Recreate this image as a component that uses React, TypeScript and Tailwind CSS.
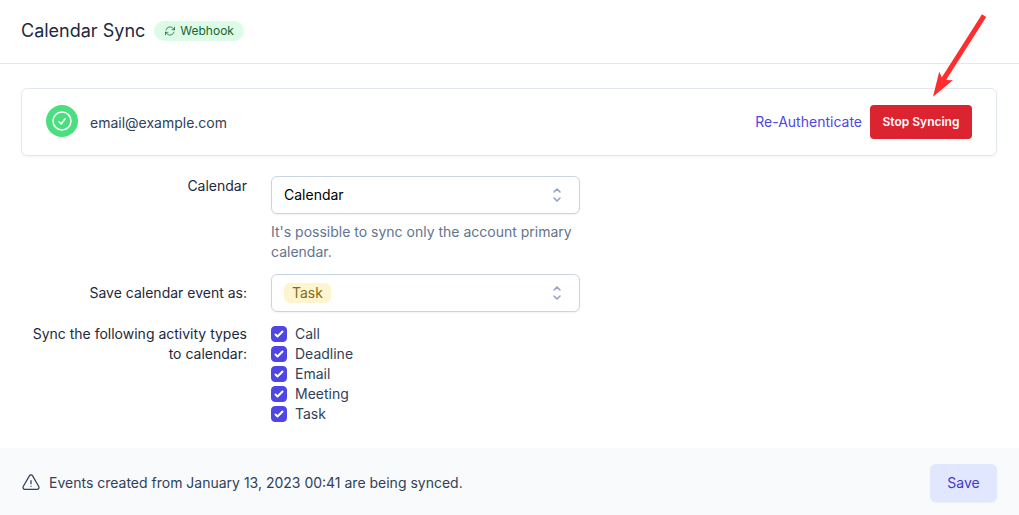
import { useState } from "react";
import type { ReactNode } from "react";

const activityTypes = ["Call", "Deadline", "Email", "Meeting", "Task"];

function OutlineIcon({ d, className }: { d: string; className: string }) {
  return (
    <svg
      viewBox="0 0 24 24"
      fill="none"
      stroke="currentColor"
      strokeWidth={1.5}
      strokeLinecap="round"
      strokeLinejoin="round"
      aria-hidden="true"
      className={className}
    >
      <path d={d} />
    </svg>
  );
}

const paths = {
  refresh:
    "M16.023 9.348h4.992v-.001M2.985 19.644v-4.992m0 0h4.992m-4.993 0 3.181 3.183a8.25 8.25 0 0 0 13.803-3.7M4.031 9.865a8.25 8.25 0 0 1 13.803-3.7l3.181 3.182m0-4.991v4.99",
  check: "M9 12.75 11.25 15 15 9.75M21 12a9 9 0 1 1-18 0 9 9 0 0 1 18 0Z",
  warning:
    "M12 9v3.75m-9.303 3.376c-.866 1.5.217 3.374 1.948 3.374h14.71c1.73 0 2.813-1.874 1.948-3.374L13.949 3.378c-.866-1.5-3.032-1.5-3.898 0L2.697 16.126ZM12 15.75h.007v.008H12v-.008Z",
};

function SelectBox({ children }: { children: ReactNode }) {
  return (
    <div className="flex h-[38px] items-center justify-between rounded-md border border-slate-300 bg-white px-3 shadow-xs">
      {children}
      <svg
        viewBox="0 0 20 20"
        fill="none"
        stroke="currentColor"
        strokeWidth={1.5}
        strokeLinecap="round"
        strokeLinejoin="round"
        aria-hidden="true"
        className="pointer-events-none size-5 shrink-0 text-slate-400"
      >
        <path d="M7 7l3-3 3 3m0 6l-3 3-3-3" />
      </svg>
    </div>
  );
}

function ActivityCheckbox({ name }: { name: string }) {
  const [checked, setChecked] = useState(true);
  return (
    <label className="flex h-5 items-center gap-2 text-slate-700">
      <span className="grid size-4 place-items-center">
        <input
          type="checkbox"
          checked={checked}
          onChange={(e) => setChecked(e.target.checked)}
          className="col-start-1 row-start-1 size-4 appearance-none rounded-sm border border-slate-300 bg-white checked:border-[#4f46e5] checked:bg-[#4f46e5]"
        />
        {checked && (
          <svg viewBox="0 0 16 16" fill="#fff" aria-hidden="true" className="pointer-events-none col-start-1 row-start-1 size-4">
            <path d="M12.207 4.793a1 1 0 010 1.414l-5 5a1 1 0 01-1.414 0l-2-2a1 1 0 011.414-1.414L6.5 9.086l4.293-4.293a1 1 0 011.414 0z" />
          </svg>
        )}
      </span>
      {name}
    </label>
  );
}

export default function App() {
  return (
    <div className="relative bg-white font-['Inter','Liberation_Sans',sans-serif] text-sm text-slate-800">
      <header className="flex items-center gap-[9px] border-b border-slate-200 pt-[17px] pr-[22px] pb-[18px] pl-[21px]">
        <h1 className="text-lg leading-7 text-slate-800">Calendar Sync</h1>
        <span className="flex h-5 items-center gap-1 rounded-full bg-[#dcfce7] px-2.5 text-xs text-[#166534]">
          <OutlineIcon d={paths.refresh} className="size-3" />
          Webhook
        </span>
      </header>

      <main className="pt-6 pr-[22px] pb-6 pl-[21px]">
        <section className="flex items-start justify-between rounded-md border border-slate-200 px-6 py-4 shadow-xs">
          <div className="flex items-start gap-3">
            <span className="grid size-8 place-items-center rounded-full bg-[#4ade80] text-white">
              <OutlineIcon d={paths.check} className="size-6" />
            </span>
            <span className="pt-2 leading-5 text-slate-700">email@example.com</span>
          </div>
          <div className="flex items-center gap-2">
            <a href="#reauthenticate" className="text-[#4f46e5]">
              Re-Authenticate
            </a>
            <button type="button" className="min-w-[102px] rounded bg-[#dc2430] px-3 py-2 text-xs leading-[18px] font-semibold text-white">
              Stop Syncing
            </button>
          </div>
        </section>

        <form id="sync-form" className="mt-5 flex flex-col gap-3" onSubmit={(e) => e.preventDefault()}>
          <div className="grid grid-cols-12 items-start gap-6">
            <label htmlFor="calendar" className="col-span-3 text-right leading-5">
              Calendar
            </label>
            <div className="col-span-4">
              <SelectBox>
                <select id="calendar" className="grow appearance-none bg-transparent text-black outline-none">
                  <option>Calendar</option>
                </select>
              </SelectBox>
              <p className="mt-2 leading-5 text-slate-500">It's possible to sync only the account primary calendar.</p>
            </div>
          </div>

          <div className="grid grid-cols-12 items-center gap-6">
            <label htmlFor="event-type" className="col-span-3 text-right leading-5">
              Save calendar event as:
            </label>
            <div className="col-span-4">
              <SelectBox>
                <select
                  id="event-type"
                  className="h-5 appearance-none rounded-md bg-[#fff4d0] px-2 leading-5 text-[#856a1a] outline-none"
                >
                  <option>Task</option>
                </select>
              </SelectBox>
            </div>
          </div>

          <div role="group" aria-labelledby="activity-types" className="grid grid-cols-12 items-start gap-6">
            <span id="activity-types" className="col-span-3 text-right leading-5">
              Sync the following activity types to calendar:
            </span>
            <div className="col-span-4 flex flex-col">
              {activityTypes.map((name) => (
                <ActivityCheckbox key={name} name={name} />
              ))}
            </div>
          </div>
        </form>
      </main>

      <footer className="flex items-center justify-between bg-slate-50 pt-4 pr-[22px] pb-[13px] pl-[21px]">
        <p className="flex items-center gap-2 text-slate-700">
          <OutlineIcon d={paths.warning} className="size-5" />
          Events created from January 13, 2023 00:41 are being synced.
        </p>
        <button type="submit" form="sync-form" className="h-[38px] min-w-[67px] rounded-md bg-[#e0e7ff] px-4 text-[#4338ca] shadow-xs">
          Save
        </button>
      </footer>

      <svg viewBox="0 0 60 90" aria-hidden="true" className="pointer-events-none absolute top-[10px] right-[29px] h-[90px] w-[60px]">
        <path d="M52 4.3 L56.2 7 L16.1 70 L22.9 70.2 L3 86.7 L9.2 61.7 L11.9 67.3 Z" fill="#ff2d2d" />
      </svg>
    </div>
  );
}
